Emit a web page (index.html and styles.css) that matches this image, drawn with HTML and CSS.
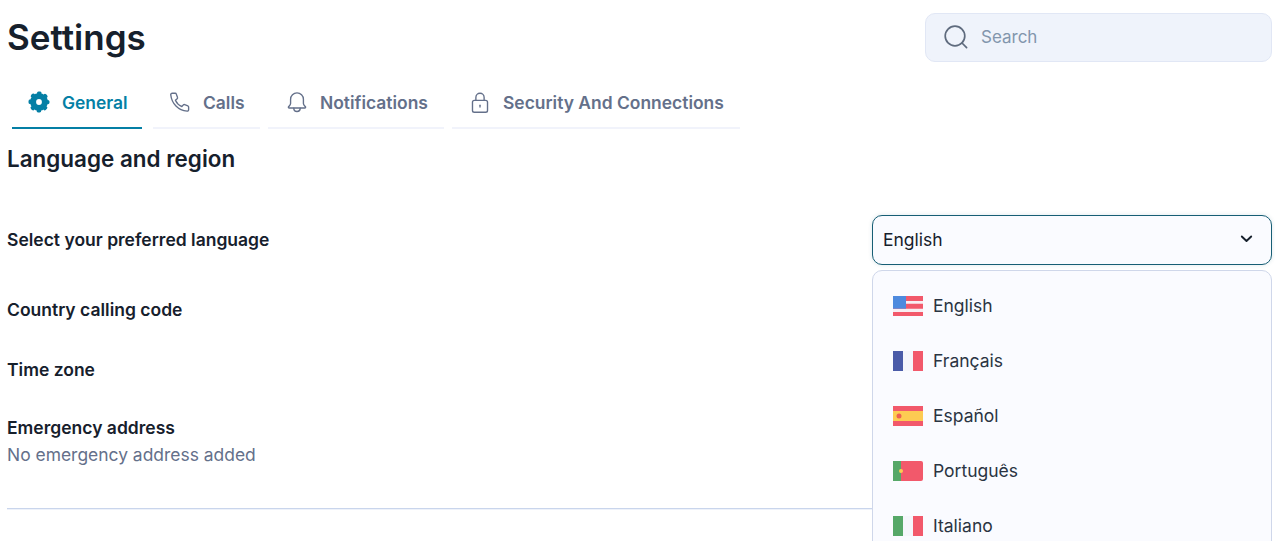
FILE: index.html
```html
<!DOCTYPE html>
<html lang="en">
<head>
<meta charset="utf-8">
<title>Settings</title>
<link rel="stylesheet" href="styles.css">
</head>
<body>
<main class="page">
  <header class="header">
    <h1 class="title">Settings</h1>
    <div class="search">
      <svg class="search-icon" viewBox="0 0 24 24" fill="none" stroke="#5f6b7e" stroke-width="1.7" stroke-linecap="round"><circle cx="11" cy="11" r="9.800"/><path d="M18 18l4.600 4.600"/></svg>
      <span class="search-text">Search</span>
    </div>
  </header>
  <nav class="tabs">
    <a class="tab tab-general active">
      <svg class="tab-icon" viewBox="0 0 22 22" fill="none" stroke="#047fa5"><circle cx="11" cy="11" r="5.900" stroke-width="6"/><circle cx="11" cy="11" r="8.900" stroke-width="3.200" stroke-dasharray="1.400 5.590" stroke-dashoffset="0.700" stroke-linecap="round"/></svg>
      <span>General</span>
    </a>
    <a class="tab tab-calls">
      <svg class="tab-icon" viewBox="0 0 24 24" fill="none" stroke="#64708a" stroke-width="1.500" stroke-linejoin="round"><path d="M3.500 2.500h3.300c.6 0 1 .3 1.200.9l1.300 3.700c.2.500 0 1-.4 1.300L7 10c1.300 3 3.800 5.600 7 7l1.700-1.900c.4-.4.900-.5 1.400-.3l3.500 1.500c.5.200.8.700.8 1.200v3c0 .9-.7 1.600-1.600 1.500C10 21 3 14 1.900 4.100c-.1-.9.600-1.600 1.600-1.600z"/></svg>
      <span>Calls</span>
    </a>
    <a class="tab tab-notify">
      <svg class="tab-icon" viewBox="0 0 24 24" fill="none" stroke="#64708a" stroke-width="1.500" stroke-linejoin="round" stroke-linecap="round"><path d="M12 2a7 7 0 0 0-7 7v4.500c0 1.500-1.400 2.700-2.200 3.700-.5.700 0 1.300.7 1.300h17c.7 0 1.200-.6.700-1.300-.8-1-2.200-2.200-2.200-3.700V9a7 7 0 0 0-7-7z"/><path d="M8.500 18.800a3.500 3.500 0 0 0 7 0"/></svg>
      <span>Notifications</span>
    </a>
    <a class="tab tab-security">
      <svg class="tab-icon" viewBox="0 0 24 24" fill="none" stroke="#64708a" stroke-width="1.500" stroke-linecap="round"><rect x="3.800" y="10.200" width="16.400" height="13" rx="2"/><path d="M7.500 10.200V7a4.500 4.500 0 0 1 9 0v3.200"/><path d="M12 15.500v2"/></svg>
      <span>Security And Connections</span>
    </a>
  </nav>
  <section class="section">
    <h2 class="section-title">Language and region</h2>
    <div class="row row-language">
      <span class="label">Select your preferred language</span>
      <div class="select-wrap">
        <div class="select">
          <span>English</span>
          <svg class="chevron" viewBox="0 0 12 8" fill="none" stroke="#16202c" stroke-width="1.900" stroke-linecap="round" stroke-linejoin="round"><path d="M1.300 1.500L6 6l4.700-4.500"/></svg>
        </div>
        <ul class="menu">
          <li class="option">
            <svg class="flag" viewBox="0 0 30 20"><rect width="30" height="20" fill="#f8eef2"/><path fill="#f2596b" d="M0 0h30v5H0zM0 7.700h30v5H0zM0 16h30v4H0z"/><rect width="13" height="12.700" fill="#4e8ade"/></svg>
            <span>English</span>
          </li>
          <li class="option">
            <svg class="flag" viewBox="0 0 30 20"><rect width="30" height="20" fill="#f5f6fb"/><rect width="10" height="20" fill="#4a5ba8"/><rect x="20" width="10" height="20" fill="#f2596b"/></svg>
            <span>Français</span>
          </li>
          <li class="option">
            <svg class="flag" viewBox="0 0 30 20"><rect width="30" height="20" fill="#f2596b"/><rect y="5" width="30" height="10" fill="#fdcb52"/><circle cx="6" cy="10" r="2.500" fill="#ee5f52"/></svg>
            <span>Español</span>
          </li>
          <li class="option">
            <svg class="flag" viewBox="0 0 30 20"><path fill="#f2596b" d="M8 0h20a2 2 0 0 1 2 2v16a2 2 0 0 1-2 2H8z"/><rect width="8" height="20" fill="#56a868"/><circle cx="8" cy="10" r="2" fill="#fdcb52"/></svg>
            <span>Português</span>
          </li>
          <li class="option">
            <svg class="flag" viewBox="0 0 30 20"><rect width="30" height="20" fill="#f5f6fb"/><rect width="10" height="20" fill="#56a868"/><rect x="20" width="10" height="20" fill="#f2596b"/></svg>
            <span>Italiano</span>
          </li>
        </ul>
      </div>
    </div>
    <div class="row row-code"><span class="label">Country calling code</span></div>
    <div class="row row-zone"><span class="label">Time zone</span></div>
    <div class="address">
      <span class="label">Emergency address</span>
      <span class="hint">No emergency address added</span>
    </div>
    <hr class="divider">
  </section>
</main>
</body>
</html>
```
FILE: styles.css
```css
* { box-sizing: border-box; }
html, body { margin: 0; height: 100%; overflow: hidden; background: #fff; }
body { font-family: Inter, "Liberation Sans", sans-serif; color: #16202c; }
.page { padding: 13px 3px 0 7px; height: 541px; overflow: hidden; }
.header { display: flex; justify-content: space-between; align-items: flex-start; height: 49px; }
.title { margin: 0; font-size: 35px; line-height: 49px; font-weight: 600; }
.search { width: 347px; height: 49px; display: flex; align-items: center; gap: 13px; padding: 0 0 2px 18px; background: #eff3fb; border: 1px solid #e1e7f5; border-radius: 10px; }
.search-icon { width: 24px; height: 24px; }
.search-text { font-size: 17px; color: #8296ad; }
.tabs { display: flex; gap: 8px; margin: 17px 0 0 5px; }
.tab { display: flex; align-items: center; height: 50px; gap: 12px; border-bottom: 2px solid #f1f3fb; font-size: 17.450px; font-weight: 600; color: #64708a; padding: 0 0 2px 18px; }
.tab.active { color: #047fa5; border-bottom-color: #047fa5; }
.tab-general { width: 130px; margin-right: 3px; padding-left: 16px; }
.tab-calls { width: 107px; padding-left: 16px; }
.tab-notify { width: 176px; }
.tab-security { width: 288px; padding-left: 17px; }
.tab-icon { width: 22px; height: 22px; flex: none; }
.section-title { margin: 15px 0 0; font-size: 22.450px; line-height: 30px; font-weight: 600; }
.label { font-size: 17.500px; font-weight: 600; line-height: 24px; }
.row { display: flex; justify-content: space-between; align-items: center; }
.row-language { height: 50px; margin-top: 41px; }
.row-code { height: 24px; margin-top: 33px; }
.row-zone { height: 24px; margin-top: 36px; }
.address { display: flex; flex-direction: column; margin-top: 34px; }
.hint { font-size: 17.450px; line-height: 30px; color: #64708a; }
.divider { margin: 38px 0 0; border: 0; border-top: 1px solid #c9d5ec; border-bottom: 1px solid #eef2fa; }
.select-wrap { position: relative; width: 400px; }
.select { height: 50px; display: flex; align-items: center; justify-content: space-between; padding: 0 18px 2px 10px; background: #fafbff; border: 1px solid #175e75; border-radius: 10px; font-size: 17.500px; box-shadow: 0 0 4px rgba(23, 94, 117, .15); }
.chevron { width: 13px; height: 8px; }
.menu { position: absolute; top: 55px; left: 0; width: 400px; height: 400px; margin: 0; padding: 7px 20px; list-style: none; background: #fafbff; border: 1px solid #cfd7ea; border-radius: 10px; }
.option { display: flex; align-items: center; gap: 10px; height: 55px; font-size: 17.500px; color: #2a3442; }
.flag { width: 30px; height: 20px; flex: none; }
```
